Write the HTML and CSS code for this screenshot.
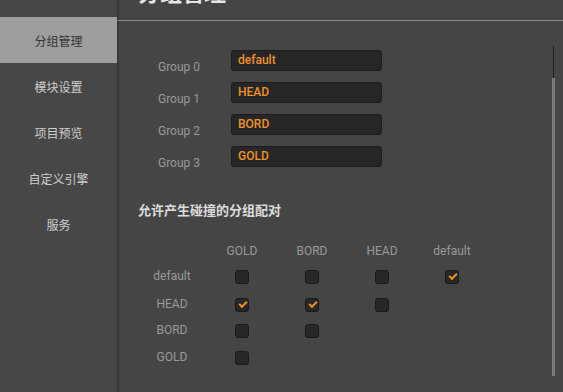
FILE: index.html
```html
<!DOCTYPE html>
<html lang="zh-CN">
<head>
    <meta charset="UTF-8">
    <title>分组管理</title>
    <link rel="stylesheet" href="styles.css">
</head>
<body>
    <div class="app">
        <nav class="sidebar">
            <div class="nav-item active">分组管理</div>
            <div class="nav-item">模块设置</div>
            <div class="nav-item">项目预览</div>
            <div class="nav-item">自定义引擎</div>
            <div class="nav-item">服务</div>
        </nav>

        <main class="panel">
            <header class="panel-header">
                <h1 class="panel-title">分组管理</h1>
            </header>

            <div class="panel-body">
                <div class="group-list">
                    <div class="group-row">
                        <span class="group-label">Group 0</span>
                        <div class="group-input">default</div>
                    </div>
                    <div class="group-row">
                        <span class="group-label">Group 1</span>
                        <div class="group-input">HEAD</div>
                    </div>
                    <div class="group-row">
                        <span class="group-label">Group 2</span>
                        <div class="group-input">BORD</div>
                    </div>
                    <div class="group-row">
                        <span class="group-label">Group 3</span>
                        <div class="group-input">GOLD</div>
                    </div>
                </div>

                <h2 class="section-title">允许产生碰撞的分组配对</h2>

                <div class="matrix">
                    <span></span>
                    <span class="col-head">GOLD</span>
                    <span class="col-head">BORD</span>
                    <span class="col-head">HEAD</span>
                    <span class="col-head">default</span>

                    <span class="row-head">default</span>
                    <span class="cell"><i class="check"></i></span>
                    <span class="cell"><i class="check"></i></span>
                    <span class="cell"><i class="check"></i></span>
                    <span class="cell"><i class="check on"></i></span>

                    <span class="row-head">HEAD</span>
                    <span class="cell"><i class="check on"></i></span>
                    <span class="cell"><i class="check on"></i></span>
                    <span class="cell"><i class="check"></i></span>
                    <span></span>

                    <span class="row-head">BORD</span>
                    <span class="cell"><i class="check"></i></span>
                    <span class="cell"><i class="check"></i></span>
                    <span></span>
                    <span></span>

                    <span class="row-head">GOLD</span>
                    <span class="cell"><i class="check"></i></span>
                    <span></span>
                    <span></span>
                    <span></span>
                </div>
            </div>

            <!-- scrollbar overlay -->
            <div class="scrollbar">
                <div class="scroll-thumb"></div>
            </div>
        </main>
    </div>
</body>
</html>
```

FILE: styles.css
```css
body {
    margin: 0;
    padding: 0;
    background-color: #454545;
    font-family: Roboto, "Noto Sans CJK SC", sans-serif;
    font-size: 12px;
    color: #999;
    overflow: hidden;
}

.app {
    display: flex;
    width: 563px;
    height: 392px;
}

.sidebar {
    width: 117px;
    flex-shrink: 0;
    background-color: #474747;
    padding-top: 17px;
    box-shadow: 1px 0 2px rgba(0, 0, 0, 0.35);
    position: relative;
    z-index: 1;
}

.nav-item {
    height: 46px;
    display: flex;
    align-items: center;
    justify-content: center;
    font-family: "Noto Sans CJK SC", sans-serif;
    font-size: 12px;
    color: #cfcfcf;
}

.nav-item.active {
    background-color: #9e9e9e;
    color: #333;
}

.panel {
    flex: 1;
    position: relative;
    background-color: #454545;
}

.panel-header {
    height: 20px;
    border-bottom: 1px solid #8a8a8a;
    overflow: hidden;
}

.panel-title {
    margin: -24px 0 0 21px;
    font-family: "Noto Sans CJK SC", sans-serif;
    font-size: 22px;
    font-weight: bold;
    line-height: 30px;
    color: #e6e6e6;
}

.panel-body {
    padding: 29px 0 0 21px;
}

.group-list {
    display: flex;
    flex-direction: column;
    gap: 11px;
}

.group-row {
    display: flex;
    align-items: flex-end;
}

.group-label {
    width: 93px;
    padding-left: 20px;
    box-sizing: border-box;
    color: #9a9a9a;
    line-height: 14px;
    margin-bottom: -3px;
}

.group-input {
    width: 151px;
    height: 21px;
    box-sizing: border-box;
    background-color: #262626;
    border: 1px solid #1c1c1c;
    border-radius: 3px;
    padding-left: 6px;
    line-height: 19px;
    font-weight: 500;
    color: #f0922a;
}

.section-title {
    margin: 33px 0 0 0;
    font-family: "Noto Sans CJK SC", sans-serif;
    font-size: 13px;
    font-weight: bold;
    color: #dcdcdc;
    line-height: 20px;
}

.matrix {
    display: grid;
    grid-template-columns: repeat(5, 70px);
    grid-template-rows: 20px 30px 25px 27px 27px;
    margin-top: 21px;
    margin-left: -1px;
}

.col-head,
.row-head {
    display: flex;
    align-items: center;
    justify-content: center;
    color: #9a9a9a;
}

.cell {
    display: flex;
    align-items: center;
    justify-content: center;
}

.check {
    width: 14px;
    height: 14px;
    box-sizing: border-box;
    background-color: #272727;
    border: 1px solid #191919;
    border-radius: 3px;
    position: relative;
    top: 1px;
}

.check.on::after {
    content: "";
    position: absolute;
    left: 3px;
    top: 2px;
    width: 6px;
    height: 3px;
    border-left: 2px solid #f39527;
    border-bottom: 2px solid #f39527;
    transform: rotate(-45deg);
}

.scrollbar {
    position: absolute;
    left: 435px;
    top: 46px;
    width: 3px;
    height: 330px;
}

.scrollbar::before {
    content: "";
    position: absolute;
    left: 1px;
    top: 0;
    width: 1px;
    height: 32px;
    background-color: #1f1f1f;
}

.scroll-thumb {
    position: absolute;
    left: 0;
    top: 32px;
    width: 3px;
    bottom: 0;
    background-color: #7b7b7b;
}
```
